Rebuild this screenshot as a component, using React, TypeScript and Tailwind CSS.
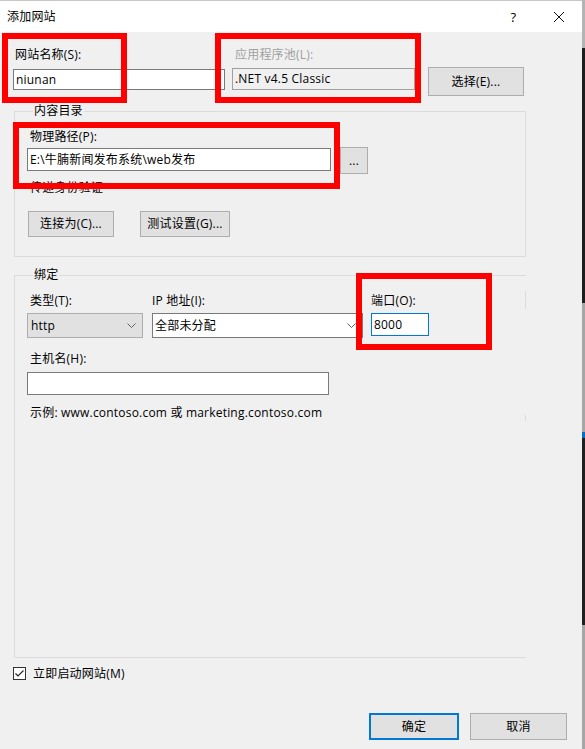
import React from "react";

function Chevron() {
  return (
    <svg width="9" height="5" viewBox="0 0 9 5" className="shrink-0">
      <path d="M0.5 0.5 L4.5 4.5 L8.5 0.5" fill="none" stroke="#606060" strokeWidth="1" />
    </svg>
  );
}

function Btn({ className, children }: { className: string; children: React.ReactNode }) {
  return (
    <div className={"flex items-center justify-center bg-[#e1e1e1] border border-[#adadad] " + className}>
      {children}
    </div>
  );
}

export default function App() {
  return (
    <div className="w-[585px] h-[749px] flex overflow-hidden bg-[#f0f0f0] font-['Open_Sans','Noto_Sans_CJK_SC',sans-serif] text-[12px] leading-[16px] tracking-[0.2px] text-black">
      <div className="relative w-[582px] h-full flex flex-col bg-[#f0f0f0]">
        {/* title bar */}
        <div className="h-[32px] shrink-0 bg-white border-t border-[#c8c8c8] flex items-center">
          <span className="ml-[7px]">添加网站</span>
          <span className="ml-auto w-[7px] text-center text-[13px]">?</span>
          <svg width="10" height="10" viewBox="0 0 10 10" className="ml-[37px] mr-[18px]">
            <path d="M0 0 L10 10 M10 0 L0 10" stroke="#111" strokeWidth="1" />
          </svg>
        </div>

        {/* body */}
        <div className="flex flex-col pl-[13px]">
          {/* row 1 */}
          <div className="mt-[15px] flex items-start">
            <div className="w-[212px] flex flex-col">
              <span className="ml-[2px]">网站名称(S):</span>
              <div className="mt-[6px] h-[21px] bg-white border border-[#7a7a7a] flex items-center pl-[2px]">niunan</div>
            </div>
            <div className="ml-[7px] w-[183px] flex flex-col">
              <span className="ml-[3px] text-[#a0a0a0]">应用程序池(L):</span>
              <div className="mt-[5px] h-[22px] bg-[#f0f0f0] border border-[#a0a0a0] flex items-center pl-[2px]">.NET v4.5 Classic</div>
            </div>
            <Btn className="ml-[13px] mt-[20px] w-[96px] h-[29px]">选择(E)...</Btn>
          </div>

          {/* 内容目录 */}
          <fieldset className="ml-[1px] mt-[7px] w-[512px] border border-[#dcdcdc] pl-[12px] pb-[19px]">
            <legend className="ml-[6px] px-[1px]">内容目录</legend>
            <div className="flex flex-col">
              <span className="ml-[3px] mt-[10px]">物理路径(P):</span>
              <div className="mt-[2px] flex items-start">
                <div className="mt-[1px] w-[304px] h-[23px] bg-white border border-[#7a7a7a] flex items-center pl-[2px]">
                  E:\牛腩新闻发布系统\web发布
                </div>
                <Btn className="ml-[9px] w-[28px] h-[27px]">...</Btn>
              </div>
              <span className="ml-[3px] mt-[6px]">传递身份验证</span>
              <div className="mt-[15px] flex">
                <Btn className="ml-[1px] w-[86px] h-[26px]">连接为(C)...</Btn>
                <Btn className="ml-[26px] w-[90px] h-[26px]">测试设置(G)...</Btn>
              </div>
            </div>
          </fieldset>

          {/* 绑定 */}
          <fieldset className="relative ml-[1px] mt-[10px] w-[512px] h-[391px] border border-r-0 border-[#dcdcdc] pl-[12px]">
            <legend className="ml-[6px] px-[1px]">绑定</legend>
            <div className="absolute right-0 top-[8px] w-[1px] h-[18px] bg-[#dcdcdc]" />
            <div className="absolute right-0 bottom-0 w-[1px] h-[6px] bg-[#dcdcdc]" />
            <div className="flex flex-col">
              <div className="mt-[10px] flex items-start">
                <div className="w-[116px] flex flex-col">
                  <span className="ml-[3px]">类型(T):</span>
                  <div className="mt-[4px] h-[25px] bg-[#e1e1e1] border border-[#adadad] flex items-center justify-between pl-[3px] pr-[6px]">
                    <span>http</span>
                    <Chevron />
                  </div>
                </div>
                <div className="ml-[9px] w-[211px] flex flex-col">
                  <span>IP 地址(I):</span>
                  <div className="mt-[4px] h-[25px] bg-white border border-[#7a7a7a] flex items-center justify-between pl-[2px] pr-[6px]">
                    <span>全部未分配</span>
                    <Chevron />
                  </div>
                </div>
                <div className="ml-[8px] w-[58px] flex flex-col">
                  <span>端口(O):</span>
                  <div className="mt-[4px] h-[23px] bg-white border border-[#0078d7] flex items-center pl-[2px]">8000</div>
                </div>
              </div>
              <span className="ml-[3px] mt-[13px]">主机名(H):</span>
              <div className="mt-[5px] w-[302px] h-[23px] bg-white border border-[#7a7a7a]" />
              <span className="ml-[3px] mt-[10px]">示例: www.contoso.com 或 marketing.contoso.com</span>
            </div>
          </fieldset>

          {/* checkbox */}
          <div className="mt-[9px] h-[13px] flex items-center">
            <div className="w-[13px] h-[13px] bg-white border border-[#333333] flex items-center justify-center">
              <svg width="11" height="11" viewBox="0 0 11 11">
                <path d="M1.5 5.5 L4 8 L9.5 2.5" fill="none" stroke="#222" strokeWidth="1.1" />
              </svg>
            </div>
            <span className="ml-[7px]">立即启动网站(M)</span>
          </div>

          {/* buttons */}
          <div className="mt-[33px] flex justify-end pr-[15px]">
            <div className="w-[90px] h-[27px] flex items-center justify-center bg-[#e1e1e1] border-2 border-[#0078d7]">确定</div>
            <Btn className="ml-[11px] w-[97px] h-[27px]">取消</Btn>
          </div>
        </div>

        {/* red annotation boxes */}
        <div className="absolute left-[2px] top-[33px] w-[125px] h-[70px] border-[6px] border-[#fe0000]" />
        <div className="absolute left-[215px] top-[33px] w-[206px] h-[70px] border-[6px] border-[#fe0000]" />
        <div className="absolute left-[13px] top-[122px] w-[327px] h-[67px] border-[6px] border-[#fe0000]" />
        <div className="absolute left-[356px] top-[273px] w-[136px] h-[77px] border-[6px] border-[#fe0000]" />
      </div>

      {/* strip of what lies behind the dialog */}
      <div className="w-[3px] h-full flex flex-col">
        <div className="h-[48px] bg-[#b4b4b4]" />
        <div className="h-[255px] bg-[#1e1e1e]" />
        <div className="h-[129px] bg-[#a6a6a6]" />
        <div className="h-[6px] bg-[#0a6ebd]" />
        <div className="h-[187px] bg-[#202020]" />
        <div className="flex-1 bg-[#a6a6a6]" />
      </div>
    </div>
  );
}
